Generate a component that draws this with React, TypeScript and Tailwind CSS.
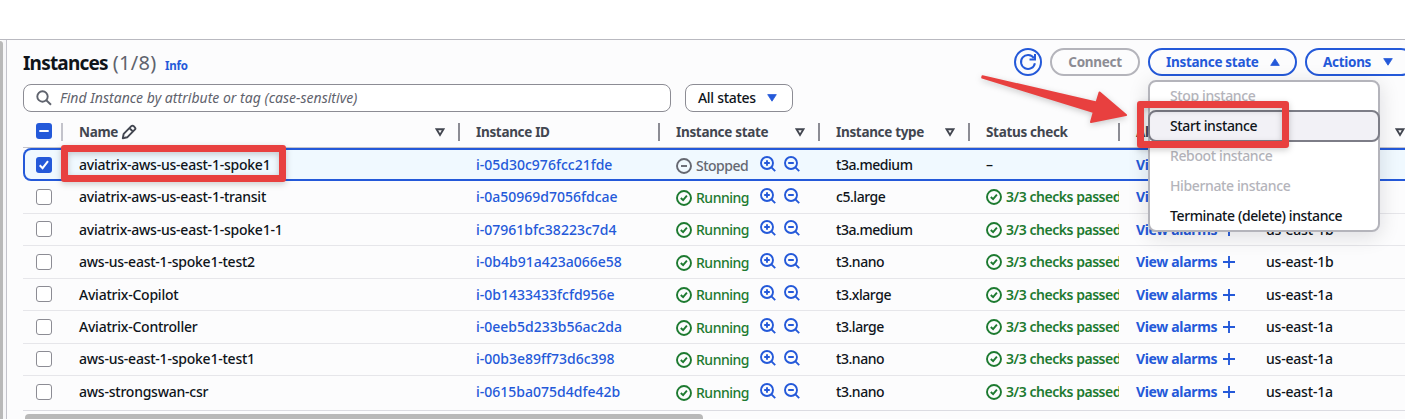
import React from 'react';

const rows = [
  { name: 'aviatrix-aws-us-east-1-spoke1', id: 'i-05d30c976fcc21fde', type: 't3a.medium', zone: 'us-east-1b' },
  { name: 'aviatrix-aws-us-east-1-transit', id: 'i-0a50969d7056fdcae', type: 'c5.large', zone: 'us-east-1a' },
  { name: 'aviatrix-aws-us-east-1-spoke1-1', id: 'i-07961bfc38223c7d4', type: 't3a.medium', zone: 'us-east-1b' },
  { name: 'aws-us-east-1-spoke1-test2', id: 'i-0b4b91a423a066e58', type: 't3.nano', zone: 'us-east-1b' },
  { name: 'Aviatrix-Copilot', id: 'i-0b1433433fcfd956e', type: 't3.xlarge', zone: 'us-east-1a' },
  { name: 'Aviatrix-Controller', id: 'i-0eeb5d233b56ac2da', type: 't3.large', zone: 'us-east-1a' },
  { name: 'aws-us-east-1-spoke1-test1', id: 'i-00b3e89ff73d6c398', type: 't3.nano', zone: 'us-east-1a' },
  { name: 'aws-strongswan-csr', id: 'i-0615ba075d4dfe42b', type: 't3.nano', zone: 'us-east-1a' },
];

const columns = 'grid grid-cols-[40px_397px_200px_160px_150px_150px_130px_200px] w-[1427px]';

function StatusIcon({ stopped = false }: { stopped?: boolean }) {
  return (
    <svg viewBox="0 0 16 16" className="w-4 h-4 shrink-0" fill="none" stroke="currentColor" strokeWidth="1.9">
      <circle cx="8" cy="8" r="7" />
      {stopped ? <path d="M5 8h6" /> : <path d="m4.800 8 2.300 2.200 3.800-4.600" />}
    </svg>
  );
}

function Zoom({ plus = false }: { plus?: boolean }) {
  return (
    <svg viewBox="0 0 16 16" className="w-4 h-4 shrink-0 text-[#2459d9]" fill="none" stroke="currentColor" strokeWidth="1.9">
      <circle cx="7" cy="7" r="6" />
      <path d="m11.2 11.2 4 4M4.2 7h5.6" />
      {plus && <path d="M7 4.2v5.6" />}
    </svg>
  );
}

function Caret({ up = false, className = '' }: { up?: boolean; className?: string }) {
  return (
    <svg viewBox="0 0 10 8" className={'w-[10px] h-2 ' + className} fill="currentColor" stroke="currentColor" strokeLinejoin="round">
      <path d={up ? 'M.7 7.4h8.6L5 .8z' : 'M.7.6h8.6L5 7.2z'} strokeWidth=".8" />
    </svg>
  );
}

function SortIcon() {
  return (
    <svg viewBox="0 0 10 9" className="w-[10px] h-[9px] shrink-0" fill="none" stroke="currentColor" strokeWidth="1.9">
      <path d="M1.5 1.2h7L5 7z" />
    </svg>
  );
}

function Checkbox({ state = 'off' }: { state?: 'off' | 'on' | 'some' }) {
  if (state === 'off') return <span className="block w-4 h-4 rounded-[3px] border border-[#8c8c94] bg-white" />;
  return (
    <span className="flex w-4 h-4 rounded-[3px] bg-[#2459d9] text-white">
      <svg viewBox="0 0 16 16" className="w-4 h-4" fill="none" stroke="currentColor" strokeWidth="2">
        <path d={state === 'on' ? 'm3.7 8.2 2.9 3 5.4-7' : 'M3.3 8h9.4'} />
      </svg>
    </span>
  );
}

function Head({ label, sort = false, edit = false }: { label: string; sort?: boolean; edit?: boolean }) {
  return (
    <div className="flex h-[18px] items-center border-r-2 border-[#8c8c94] pl-4 pr-[13px] text-[#424650]">
      <span className="whitespace-nowrap font-bold text-[13.5px] leading-[18px] tracking-[-0.32px]">{label}</span>
      {edit && (
        <svg viewBox="0 0 16 16" className="ml-[3px] w-4 h-4" fill="none" stroke="currentColor" strokeWidth="1.9" strokeLinejoin="round">
          <path d="M1.800 14.200 2.700 9.800 10.300 2.200C11 1.500 12 1.500 12.700 2.200L13.800 3.300C14.500 4 14.500 5 13.800 5.700L6.200 13.300zM8.500 4.200 11.800 7.500" />
        </svg>
      )}
      <span className="grow" />
      {sort && <SortIcon />}
    </div>
  );
}

const menu = [
  { label: 'Stop instance', off: true },
  { label: 'Start instance', active: true },
  { label: 'Reboot instance', off: true },
  { label: 'Hibernate instance', off: true },
  { label: 'Terminate (delete) instance' },
];

const pill = 'flex h-7 shrink-0 items-center rounded-full border-2 text-[13.5px] tracking-[-0.3px] font-bold whitespace-nowrap';

export default function App() {
  return (
    <div className="relative flex h-[419px] w-[1405px] flex-col overflow-hidden bg-white text-[14px] text-[#0f141a] font-['Noto_Sans',sans-serif]">
      <div className="h-10 shrink-0 border-b border-[#b9b9c0]" />
      <div className="flex grow bg-[#fcfcfd]">
        <div className="w-[3px] shrink-0 rounded-tr bg-[#b9b9b9] mt-px" />
        <div className="w-1 shrink-0 border-r border-[#c3c3cb] bg-[#f7f7f9]" />
        <div className="w-[1398px] overflow-hidden pl-4 pt-2">
          <div className="flex h-7 items-center">
            <h1 className="flex w-[134px] items-baseline gap-[5px] whitespace-nowrap pt-0.5 text-[19px] font-bold tracking-[-0.8px]">
              Instances <span className="text-[20px] font-normal tracking-[0.3px] text-[#5f636d]">(1/8)</span>
            </h1>
            <a className="ml-2 mt-[7px] text-[11.5px] font-bold tracking-[-0.2px] text-[#2459d9]">Info</a>
            <div className="ml-auto mr-[-10px] flex gap-2 text-[#2459d9]">
              <span className={pill + ' w-7 justify-center border-[#2459d9]'}>
                <svg viewBox="0 0 18 18" className="h-[18px] w-[18px]" fill="none" stroke="currentColor" strokeWidth="2">
                  <path d="M15.900 10.200A7 7 0 1 1 14.800 5M16 1v5.500h-5.500" />
                </svg>
              </span>
              <span className={pill + ' w-[90px] justify-center border-[#b4b4bb] text-[#8c8c94]'}>Connect</span>
              <span className={pill + ' w-[149px] border-[#2459d9] pl-4'}>
                Instance state<Caret up className="ml-auto mr-[15px]" />
              </span>
              <span className={pill + ' w-[110px] border-[#2459d9] pl-4'}>
                Actions<Caret className="ml-auto mr-[20px]" />
              </span>
            </div>
          </div>
          <div className="mt-2 flex gap-[14px]">
            <div className="flex h-7 w-[648px] items-center rounded-lg border border-[#8c8c94] bg-white pl-3 pb-px text-[#5f636d] italic tracking-[0.02px]">
              <svg viewBox="0 0 16 16" className="mr-2 mt-px h-4 w-4" fill="none" stroke="currentColor" strokeWidth="1.9">
                <circle cx="6.500" cy="6.500" r="5.200" />
                <path d="m10.300 10.300 4.700 4.500" />
              </svg>
              Find Instance by attribute or tag (case-sensitive)
            </div>
            <div className="flex h-7 w-[108px] items-center rounded-lg border border-[#8c8c94] bg-white pl-3 pb-px font-[550] tracking-[-0.3px]">
              All states<Caret className="ml-auto mr-[15px] text-[#2459d9]" />
            </div>
          </div>
          <div className={columns + ' mt-[11px] h-[25px] border-b border-[#c3c3cb]'}>
            <div className="flex h-[18px] items-center border-r-2 border-[#c3c3cb] pl-[13px] pb-0.5"><Checkbox state="some" /></div>
            <Head label="Name" sort edit />
            <Head label="Instance ID" />
            <Head label="Instance state" sort />
            <Head label="Instance type" sort />
            <Head label="Status check" />
            <Head label="Alarm status" />
            <div className="flex h-[18px] items-center pl-[145px] text-[#424650]"><SortIcon /></div>
          </div>
          {rows.map((r, i) => {
            const nudge = i === 2 || i === 4 ? ' pt-px' : '';
            return (
              <div
                key={r.id}
                className={
                  columns +
                  ' items-center font-[550] leading-5 whitespace-nowrap ' +
                  (i === 0
                    ? 'h-[33px] rounded-l-lg bg-[#f0f9ff] shadow-[inset_0_0_0_2px_#2459d9]'
                    : i === 7
                      ? 'h-[35px] border-b border-[#dcdce2] pb-[2px]'
                      : 'h-[32.5px] border-b border-[#e6e6ea]')
                }
              >
                <div className="pl-[13px]"><Checkbox state={i === 0 ? 'on' : 'off'} /></div>
                <div className={'pl-4 tracking-[-0.23px]' + nudge}>{r.name}</div>
                <div className={'pl-4 font-medium text-[#2459d9]' + nudge}>{r.id}</div>
                <div className={'flex items-center pl-4 ' + (i === 0 ? 'text-[#656871]' : 'text-[#1d7a30]')}>
                  <span className="mt-0.5 flex w-[84px] items-center gap-1 tracking-[-0.5px]"><StatusIcon stopped={i === 0} />{i === 0 ? 'Stopped' : 'Running'}</span>
                  <span className="flex gap-2 pb-0.5"><Zoom plus /><Zoom /></span>
                </div>
                <div className={'pl-4 tracking-[-0.45px]' + nudge}>{r.type}</div>
                <div className={'mr-px flex items-center gap-1 overflow-hidden pl-4 ' + (i ? 'font-semibold tracking-[-0.46px] text-[#1d7a30]' : '') + nudge}>
                  {i ? <><StatusIcon />3/3 checks passed</> : '–'}
                </div>
                <div className={'flex items-center gap-1.5 pl-4 font-bold tracking-[-0.34px] text-[#2459d9]' + nudge}>
                  View alarms
                  <svg viewBox="0 0 12 12" className="h-3 w-3" fill="none" stroke="currentColor" strokeWidth="1.9"><path d="M0 6h12M6 0v12" /></svg>
                </div>
                <div className={'pl-4 tracking-[-0.2px]' + nudge}>{r.zone}</div>
              </div>
            );
          })}
          <div className="ml-0.5 mt-[3px] h-4 w-[678px] rounded-t bg-[#b9b9b9]" />
        </div>
      </div>

      <div className="absolute left-[1148px] top-[80px] h-[152px] w-[232px] rounded-lg border-2 border-[#b4b4bb] bg-white shadow-[0_4px_20px_1px_rgba(0,7,22,0.12)]">
        <div className="-mx-0.5 -mt-0.5 flex flex-col">
          {menu.map((m) => (
            <div
              key={m.label}
              className={
                'flex items-center px-[22px] pb-px font-[550] tracking-[-0.38px] ' +
                (m.active
                  ? 'relative -my-px h-8 rounded-lg border-2 border-[#7d7d87] bg-[#f2f1f6] !px-5 '
                  : m.off
                    ? 'h-[30px] text-[#b4b4bb] '
                    : 'h-[30px] ') +
                (m.label === 'Stop instance' ? '!h-[31px]' : '')
              }
            >
              {m.label}
            </div>
          ))}
        </div>
      </div>

      <div className="absolute left-[61px] top-[145px] h-[37px] w-[225px] rounded-[3px] border-[7px] border-[#e8403f] drop-shadow-[0_2px_3px_rgba(0,0,0,0.2)]" />
      <div className="absolute left-[1137px] top-[101px] h-[47px] w-[152px] rounded-[3px] border-[7px] border-[#e8403f] drop-shadow-[0_2px_3px_rgba(0,0,0,0.2)]" />
      <svg viewBox="0 0 160 60" className="absolute left-[975px] top-[70px] h-[60px] w-[160px] drop-shadow-[0_2px_3px_rgba(0,0,0,0.2)]" fill="#e8403f" stroke="#e8403f" strokeWidth="2" strokeLinejoin="round">
        <path d="M7.500 6.200 121.500 32.500 124.600 22.400 151 45 116 52 118.800 42 7.200 7.600z" />
      </svg>
    </div>
  );
}
